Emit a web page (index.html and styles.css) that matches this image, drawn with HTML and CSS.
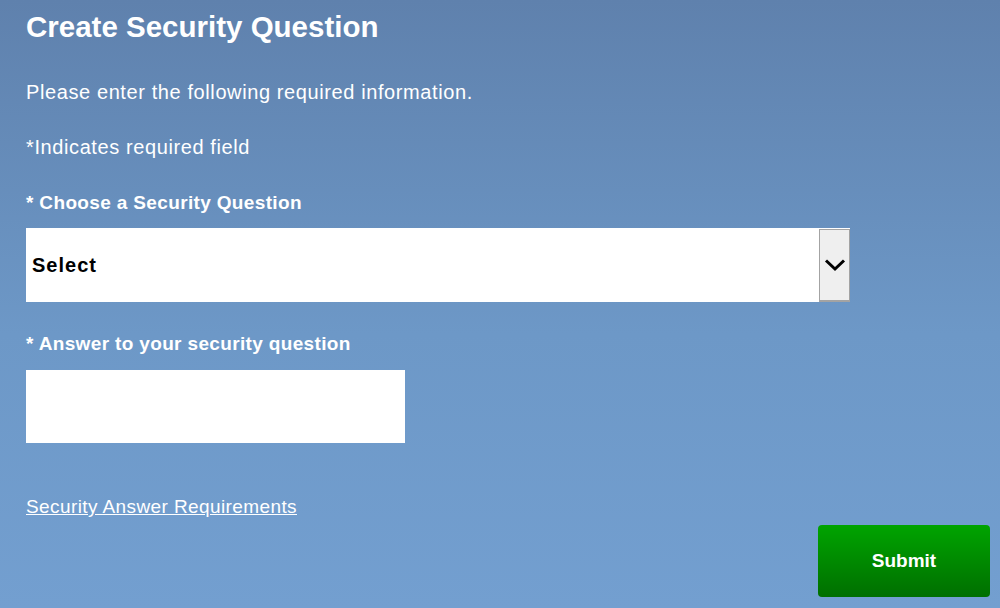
FILE: index.html
```html
<!DOCTYPE html>
<html lang="en">
<head>
    <meta charset="UTF-8">
    <title>Create Security Question</title>
    <link rel="stylesheet" href="styles.css">
</head>
<body>
    <div class="page">
        <h1>Create Security Question</h1>
        <p class="intro">Please enter the following required information.</p>
        <p class="note">*Indicates required field</p>

        <form id="questionForm">
            <label for="question" class="label">* Choose a Security Question</label>
            <div class="select-wrap">
                <select id="question" name="question">
                    <option value="">Select</option>
                    <option value="pet">What was the name of your first pet?</option>
                    <option value="city">In what city were you born?</option>
                    <option value="school">What was the name of your elementary school?</option>
                </select>
                <div class="select-arrow">
                    <svg width="22" height="14" viewBox="0 0 22 14">
                        <path d="M2 2.5 L11 11 L20 2.5" fill="none" stroke="#000" stroke-width="3"/>
                    </svg>
                </div>
            </div>

            <label for="answer" class="label label-answer">* Answer to your security question</label>
            <input type="text" id="answer" name="answer" class="answer">

            <a href="#" class="req-link">Security Answer Requirements</a>

            <div class="actions">
                <button type="submit">Submit</button>
            </div>
        </form>
    </div>
</body>
</html>
```

FILE: styles.css
```css
/* Base */
* {
    margin: 0;
    padding: 0;
    box-sizing: border-box;
}

html, body {
    height: 100%;
}

body {
    font-family: 'Liberation Sans', Arial, sans-serif;
    background: linear-gradient(180deg, #5f81ad 0%, #6d98c7 55%, #739fd0 100%);
    color: #fff;
    overflow: hidden;
}

.page {
    padding: 11px 10px 0 26px;
}

/* Titre */
h1 {
    font-size: 29.5px;
    line-height: 32px;
    font-weight: bold;
}

.intro, .note {
    font-size: 20px;
    line-height: 22px;
    letter-spacing: 0.6px;
}

.intro {
    margin-top: 38px;
}

.note {
    margin-top: 33px;
}

/* Champs */
.label {
    display: block;
    font-size: 19px;
    line-height: 22px;
    font-weight: bold;
    letter-spacing: 0.35px;
    margin-top: 34px;
}

.label-answer {
    margin-top: 31px;
}

.select-wrap {
    display: flex;
    width: 824px;
    height: 74px;
    margin-top: 14px;
    background: #fff;
}

.select-wrap select {
    flex: 1;
    border: none;
    background: #fff;
    appearance: none;
    -webkit-appearance: none;
    font-family: 'Liberation Sans', Arial, sans-serif;
    font-size: 20px;
    font-weight: bold;
    letter-spacing: 1px;
    color: #000;
    padding: 0 6px;
    outline: none;
}

.select-arrow {
    width: 31px;
    margin: 1px 0 0;
    background: #efefef;
    border: 1px solid #a3a3a3;
    border-bottom-width: 2px;
    display: flex;
    align-items: center;
    justify-content: center;
}

.answer {
    display: block;
    width: 379px;
    height: 73px;
    margin-top: 15px;
    border: none;
    background: #fff;
    font-size: 18px;
    padding: 0 8px;
    outline: none;
}

/* Lien */
.req-link {
    display: inline-block;
    margin-top: 53px;
    font-size: 19px;
    line-height: 22px;
    letter-spacing: 0.4px;
    color: #fff;
    text-decoration: underline;
}

/* Bouton */
.actions {
    display: flex;
    justify-content: flex-end;
    margin-top: 7px;
}

button {
    width: 172px;
    height: 72px;
    border: none;
    border-radius: 4px;
    background: linear-gradient(180deg, #00a400, #006f00);
    color: #fff;
    font-family: 'Liberation Sans', Arial, sans-serif;
    font-size: 19px;
    font-weight: bold;
    cursor: pointer;
}
```
